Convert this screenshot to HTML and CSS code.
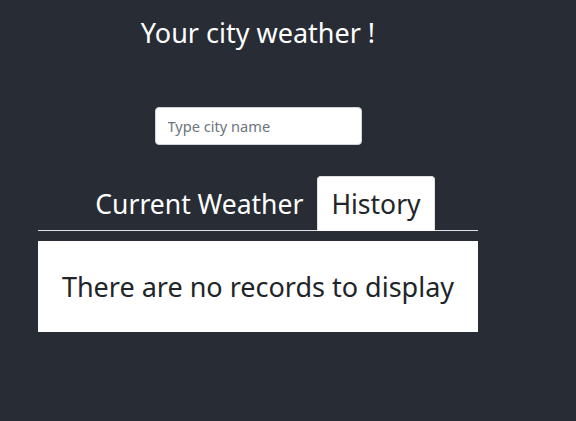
FILE: index.html
```html
<!DOCTYPE html>
<html>
<head>
<meta charset="utf-8">
<link rel="stylesheet" href="styles.css">
</head>
<body>
<div class="app">
  <h1 class="title">Your city weather !</h1>
  <div class="search">
    <input class="city-input" type="text" placeholder="Type city name">
  </div>
  <div class="panel">
    <ul class="tabs">
      <li class="tab">Current Weather</li>
      <li class="tab active">History</li>
    </ul>
    <div class="records">There are no records to display</div>
  </div>
</div>
</body>
</html>
```

FILE: styles.css
```css
html, body {
  margin: 0;
  padding: 0;
  background: #282c34;
  height: 100%;
}
body {
  font-family: "Noto Sans", "Open Sans", sans-serif;
}
.app {
  width: 516px;
  display: flex;
  flex-direction: column;
  align-items: center;
}
.title {
  margin: 14px 0 0;
  font-size: 27px;
  font-weight: 400;
  color: #ffffff;
  line-height: 38px;
}
.search {
  margin-top: 55px;
}
.city-input {
  box-sizing: border-box;
  width: 207px;
  height: 38px;
  border: 1px solid #ced4da;
  border-radius: 4px;
  padding: 0 12px;
  font-family: inherit;
  font-size: 14.6px;
  color: #495057;
  background: #fff;
  outline: none;
}
.city-input::placeholder {
  color: #6c757d;
}
.panel {
  width: 440px;
  margin-top: 31px;
}
.tabs {
  list-style: none;
  margin: 0;
  padding: 0;
  display: flex;
  justify-content: center;
  border-bottom: 1px solid #dee2e6;
}
.tab {
  box-sizing: border-box;
  height: 55px;
  padding: 0 13px;
  font-size: 26.5px;
  line-height: 54px;
  color: #ffffff;
  border: 1px solid transparent;
  border-top-left-radius: 4px;
  border-top-right-radius: 4px;
  margin-bottom: -1px;
}
.tab.active {
  background: #ffffff;
  color: #212529;
  border-color: #dee2e6 #dee2e6 #fff;
}
.records {
  margin-top: 10px;
  background: #ffffff;
  height: 91px;
  display: flex;
  align-items: center;
  justify-content: center;
  font-size: 27px;
  color: #212529;
}
```
